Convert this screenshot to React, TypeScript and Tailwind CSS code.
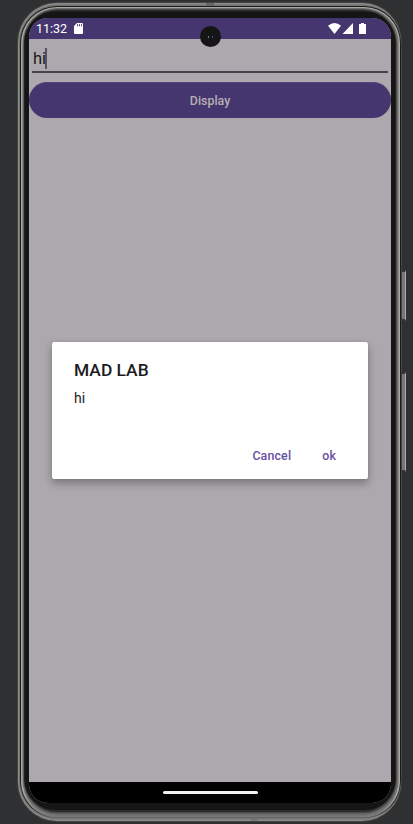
function StatusBar() {
  return (
    <div className="flex h-[21px] shrink-0 items-center bg-[#46366f] pr-[24px] pl-[7px] text-white">
      <span className="mt-[2px] w-[34px] text-[12.5px] leading-none">11:32</span>
      <svg className="mb-[1px] ml-[4px] h-[11px] w-[9px]" viewBox="0 0 9 11" fill="currentColor">
        <path fillRule="evenodd" d="M3 0h5q1 0 1 1v9q0 1-1 1H1q-1 0-1-1V3zM3 1.3v2h1v-2zM5 1.3v2h1v-2zM7 1.3v2h1v-2z" />
      </svg>
      <svg className="mb-[1px] ml-auto h-[11px] w-[39px]" viewBox="0 0 39 11" fill="currentColor">
        <path d="M0 2.8Q6.5-2.6 13 2.8L6.500 11z" />
        <path d="M25 0v11H14.5z" />
        <path d="M31.5 1H33V0h3v1h1.500q.5 0 .5.5v9q0 .5-.5.5h-6q-.5 0-.5-.5v-9q0-.5.5-.5z" />
      </svg>
    </div>
  );
}

function Dialog() {
  return (
    <div className="absolute top-[324px] left-[23px] flex h-[137px] w-[316px] flex-col rounded-[2px] bg-white pt-[18px] pr-[32px] pl-[22px] text-[#1c1b1f] shadow-[0_0_1px_#777,0_4px_9px_rgba(0,0,0,0.32)]">
      <h1 className="text-[17.4px] leading-[21px] font-medium">MAD LAB</h1>
      <p className="mt-[9px] text-[14px] leading-[16px]">hi</p>
      <div className="mt-auto mb-[15px] flex justify-end gap-[31px] text-[12.4px] leading-[16px] font-medium tracking-[0.15px] text-[#6750a4]">
        <button>Cancel</button>
        <button>ok</button>
      </div>
    </div>
  );
}

function Screen() {
  return (
    <div className="relative flex h-[785px] w-[362px] flex-col overflow-hidden rounded-[19px] bg-[#ada8ae]">
      <StatusBar />
      <main className="flex grow flex-col">
        <div className="mx-[3px] flex h-[34px] items-center border-b-2 border-[#45434d] pt-[7px] pl-px text-[16.5px] leading-none text-[#1b1a20]">
          <span className="mt-[2px] w-[12px]">hi</span>
          <span className="h-[21px] w-[2px] bg-[#55525d]" />
        </div>
        <button className="mt-[9px] h-[36px] rounded-full border-t border-[#54457a] bg-[#46366f] pt-px text-[12.4px] font-medium text-[#b5b0b4]">
          Display
        </button>
      </main>
      <nav className="flex h-[21px] shrink-0 justify-center bg-black pt-[9px]">
        <div className="h-[3px] w-[95px] rounded-full bg-[#f1f1ef]" />
      </nav>
      <div className="absolute top-[8px] left-[171px] flex h-[21px] w-[21px] items-center justify-center gap-[3px] rounded-full bg-[#151515]">
        <span className="h-[2px] w-[1px] bg-[#448b94]" />
        <span className="h-[2px] w-[1px] bg-[#4050a0]" />
      </div>
      <Dialog />
    </div>
  );
}

function SideKeys() {
  return (
    <div className="flex w-[4px] flex-col pt-[268px]">
      <div className="h-[51px] border-y-2 border-r border-y-[#333] border-r-[#aaa] bg-[#777]" />
      <div className="mt-[51px] h-[100px] border-y-2 border-r border-y-[#333] border-r-[#aaa] bg-[#777]" />
    </div>
  );
}

/* Metal casing, drawn as rounded shells from the outside in. */
function Casing() {
  return (
    <svg className="absolute inset-0 h-[820px] w-[385px]" viewBox="17 2 385 820">
      <defs>
        <linearGradient id="groove" gradientUnits="userSpaceOnUse" x1="0" x2="0" y1="808" y2="818">
          <stop offset="0" stopColor="#1c1c1c" />
          <stop offset="1" stopColor="#555" />
        </linearGradient>
        <linearGradient id="rim" gradientUnits="userSpaceOnUse" x1="0" x2="0" y1="790" y2="817">
          <stop offset="0" stopColor="#aaa8a5" />
          <stop offset="1" stopColor="#777" />
        </linearGradient>
      </defs>
      <rect x="17" y="2" width="385" height="820" rx="40" fill="#444" />
      <rect x="18" y="3" width="383" height="818" rx="39" fill="#8b8b88" />
      <rect x="19" y="4.500" width="382" height="815" rx="38" fill="#747472" />
      <rect x="20" y="6" width="381" height="812" rx="37" fill="url(#groove)" />
      <rect x="21" y="7" width="379" height="810.500" rx="36" fill="url(#rim)" />
      <rect x="22.500" y="8" width="376" height="807.500" rx="35" fill="#6c6c6c" />
      <rect x="23.500" y="9" width="373.500" height="804.500" rx="34" fill="#4c4c4c" />
      <rect x="24" y="10" width="372" height="802" rx="33" fill="#2c2c2c" />
      <rect x="24.500" y="11.500" width="371" height="798.500" rx="31" fill="#151515" />
      <rect x="206" y="3" width="8" height="3" fill="#666" />
      <rect x="251" y="819" width="7" height="2" fill="#777" />
    </svg>
  );
}

export default function App() {
  return (
    <div className="flex h-[824px] w-[413px] overflow-hidden bg-[#2f3032] pt-[2px] pl-[17px] font-['Roboto','Liberation_Sans',sans-serif]">
      <div className="relative h-[820px] w-[385px] shrink-0 pt-[16px] pl-[12px]">
        <Casing />
        <Screen />
      </div>
      <SideKeys />
    </div>
  );
}
